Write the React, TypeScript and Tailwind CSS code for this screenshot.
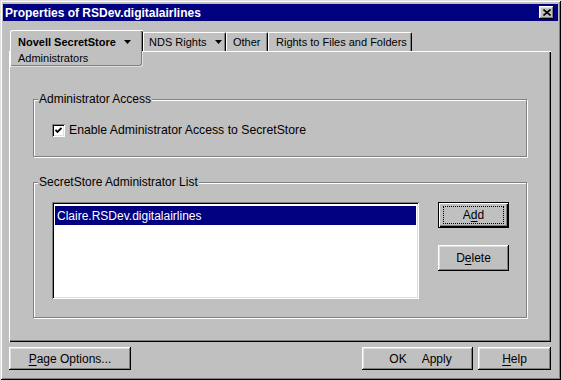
import React from "react";

const raised =
  "shadow-[inset_-1px_-1px_#000,inset_1px_1px_#fff,inset_-2px_-2px_#808080,inset_2px_2px_#dfdfdf]";

function Arrow() {
  return (
    <svg width="7" height="4" viewBox="0 0 7 4" className="shrink-0">
      <path d="M0 0h7L3.5 4z" fill="#000" />
    </svg>
  );
}

function Tab({ w, pl, children }: { w: string; pl: string; children: React.ReactNode }) {
  return (
    <div
      className={`${w} ${pl} h-[19px] flex items-center text-[11px] leading-[13px] border-t border-l border-t-white border-l-white border-r border-r-black shadow-[inset_-1px_0_#808080] rounded-tr-[2px]`}
    >
      {children}
    </div>
  );
}

function Button({
  w,
  h,
  children,
  isDefault,
}: {
  w: string;
  h: string;
  children: React.ReactNode;
  isDefault?: boolean;
}) {
  if (isDefault) {
    return (
      <button
        className={`${w} ${h} flex border border-black px-[4px] py-[3px] bg-[#c0c0c0] shadow-[inset_1px_1px_#fff,inset_-1px_-1px_#000,inset_-2px_-2px_#808080]`}
      >
        <span className="flex-1 flex items-center justify-center border border-dotted border-black leading-[14px]">
          {children}
        </span>
      </button>
    );
  }
  return (
    <button
      className={`${w} ${h} flex items-center justify-center bg-[#c0c0c0] leading-[14px] ${raised}`}
    >
      {children}
    </button>
  );
}

function Group({
  label,
  h,
  className,
  children,
}: {
  label: string;
  h: string;
  className?: string;
  children: React.ReactNode;
}) {
  return (
    <div
      className={`relative w-[494px] ${h} border border-[#808080] shadow-[1px_1px_0_#fff,inset_1px_1px_0_#fff] ${className ?? ""}`}
    >
      <span className="absolute -top-[8px] left-[4px] px-[1px] bg-[#c0c0c0] leading-[14px]">
        {label}
      </span>
      {children}
    </div>
  );
}

export default function App() {
  return (
    <div className="w-[561px] h-[380px] bg-[#c0c0c0] flex flex-col pt-[4px] px-[3px] text-[12px] text-black font-['Liberation_Sans',Arial,sans-serif] shadow-[inset_1px_1px_#dfdfdf,inset_-1px_-1px_#000,inset_2px_2px_#fff,inset_-2px_-2px_#808080]">
      {/* TITLE BAR */}
      <div className="h-[17px] bg-[#000080] flex items-center justify-between pl-[2px] pr-[4px]">
        <span className="text-white font-bold text-[12px] leading-[14px]">
          Properties of RSDev.digitalairlines
        </span>
        <div className={`w-[15px] h-[13px] bg-[#c0c0c0] flex items-center justify-center ${raised}`}>
          <svg width="8" height="7" viewBox="0 0 8 7">
            <path d="M0.5 0.5L7.5 6.5M7.5 0.5L0.5 6.5" stroke="#000" strokeWidth="1.6" />
          </svg>
        </div>
      </div>

      {/* TABS */}
      <div className="mt-[9px] pl-[7px] flex items-end h-[21px]">
        <div className="relative z-10 w-[133px] h-[37px] -mb-[16px] self-start flex flex-col bg-[#c0c0c0] border-t border-l border-white rounded-tl-[3px] text-[11px]">
          <div className="h-[20px] flex items-center pl-[7px] pt-[2px] leading-[14px] font-bold border-r border-r-black shadow-[inset_-1px_0_#808080] rounded-tr-[2px]">
            Novell SecretStore
            <span className="ml-[8px]">
              <Arrow />
            </span>
          </div>
          <div className="flex-1 pl-[7px] leading-[14px] border-r border-b border-[#dfdfdf] rounded-br-[3px] shadow-[inset_-1px_-1px_#808080]">
            Administrators
          </div>
        </div>
        <Tab w="w-[83px]" pl="pl-[5px]">
          NDS Rights
          <span className="ml-[9px]">
            <Arrow />
          </span>
        </Tab>
        <Tab w="w-[42px]" pl="pl-[6px]">
          Other
        </Tab>
        <Tab w="w-[144px]" pl="pl-[7px]">
          Rights to Files and Folders
        </Tab>
      </div>

      {/* PANEL */}
      <div className="ml-[6px] w-[542px] h-[291px] flex flex-col pl-[24px] pt-[48px] shadow-[inset_1px_1px_#fff,inset_-1px_-1px_#000,inset_-2px_-2px_#808080]">
        <Group label="Administrator Access" h="h-[58px]">
          <div className="flex items-center pl-[18px] pt-[23px]">
            <div className="w-[13px] h-[13px] bg-white flex items-center justify-center shadow-[inset_1px_1px_#808080,inset_-1px_-1px_#fff,inset_2px_2px_#000,inset_-2px_-2px_#dfdfdf]">
              <svg width="7" height="7" viewBox="0 0 7 7">
                <path d="M0.5 3L2.5 5L6.5 1" fill="none" stroke="#000" strokeWidth="1.8" />
              </svg>
            </div>
            <span className="ml-[4px] leading-[14px] text-[12.25px]">
              Enable Administrator Access to SecretStore
            </span>
          </div>
        </Group>

        <Group label="SecretStore Administrator List" h="h-[136px]" className="mt-[25px]">
          <div className="flex pl-[18px] pt-[19px]">
            <div className="w-[367px] h-[97px] bg-white pt-[4px] px-[3px] shadow-[inset_1px_1px_#808080,inset_-1px_-1px_#fff,inset_2px_2px_#000,inset_-2px_-2px_#dfdfdf]">
              <div className="h-[19px] bg-[#000080] text-white flex items-center pl-[2px] leading-[14px]">
                Claire.RSDev.digitalairlines
              </div>
            </div>
            <div className="ml-[19px] flex flex-col gap-[17px]">
              <Button w="w-[71px]" h="h-[26px]" isDefault>
                <span>
                  A<u className="underline-offset-[2px]">d</u>d
                </span>
              </Button>
              <Button w="w-[71px]" h="h-[26px]">
                <span>
                  D<u className="underline-offset-[2px]">e</u>lete
                </span>
              </Button>
            </div>
          </div>
        </Group>
      </div>

      {/* FOOTER BUTTONS */}
      <div className="mt-[5px] flex pl-[6px] pr-[7px]">
        <Button w="w-[122px]" h="h-[23px]">
          <span>
            <u className="underline-offset-[2px]">P</u>age Options...
          </span>
        </Button>
        <div className="ml-auto flex gap-[5px]">
          <Button w="w-[111px]" h="h-[23px]">
            <span className="pl-[6px]">
              OK<span className="ml-[15px]">Apply</span>
            </span>
          </Button>
          <Button w="w-[73px]" h="h-[23px]">
            <span>
              <u className="underline-offset-[2px]">H</u>elp
            </span>
          </Button>
        </div>
      </div>
    </div>
  );
}
